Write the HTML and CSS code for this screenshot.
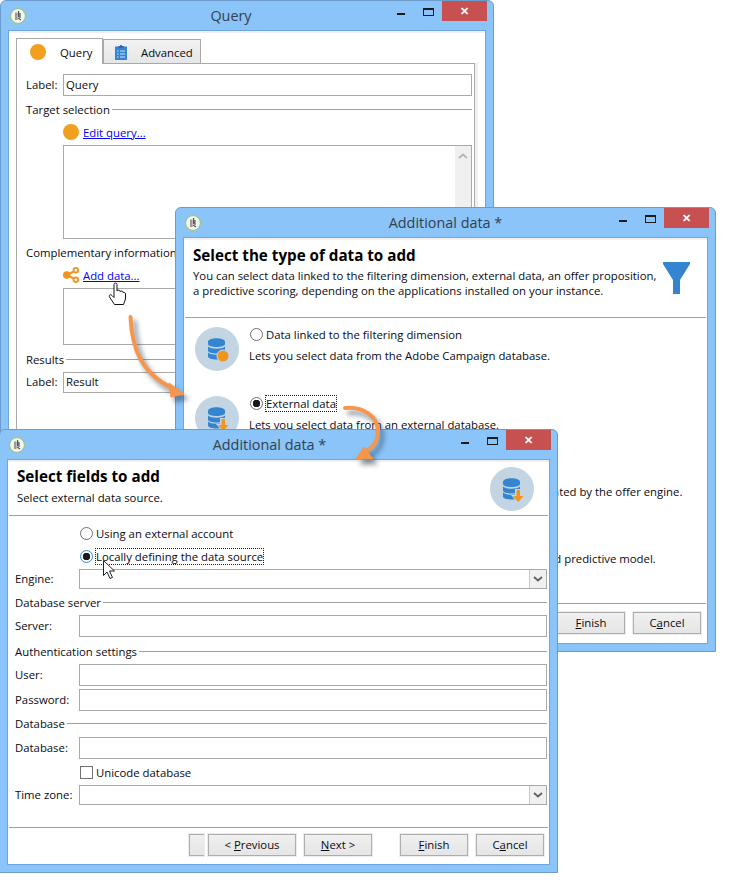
FILE: index.html
```html
<!DOCTYPE html>
<html lang="en">
<head>
    <meta charset="UTF-8">
    <title>Additional data</title>
    <link rel="stylesheet" href="styles.css">
</head>
<body>

    <!-- Icons used more than once -->
    <svg class="defs">
        <defs>
            <symbol id="appIcon" viewBox="0 0 16 16">
                <circle cx="8" cy="8" r="7.4" fill="#f4f6f2" stroke="#9cc45c" stroke-width="1"/>
                <path d="M5 4.500h2.600v7.500H5z" fill="#9a9a9a"/>
                <path d="M8.600 3v6M10 5v5M8 10l3 2" stroke="#555" stroke-width="1.200" fill="none"/>
            </symbol>
            <symbol id="dbShape" viewBox="0 0 44 44">
                <circle cx="22" cy="22" r="22" fill="#c3d5e2"/>
                <path d="M13 15c0-5 17-5 17 0v2c0 4-17 4-17 0z" fill="#3484d2"/>
                <path d="M13 19.500c3 3 14 3 17 0v4c0 4-17 4-17 0z" fill="#3484d2"/>
                <path d="M13 25.500c3 3 14 3 17 0v4c0 4-17 4-17 0z" fill="#3484d2"/>
            </symbol>
            <symbol id="dbDown" viewBox="0 0 44 44">
                <use href="#dbShape"/>
                <path d="M25 22h6v6h4l-7 8-7-8h4z" fill="#c3d5e2"/>
                <path d="M26.500 23h3.500v6h3.500l-5.250 6-5.250-6h3.500z" fill="#f0951e"/>
            </symbol>
            <symbol id="chevDown" viewBox="0 0 10 6">
                <path d="M1 1l4 3.500L9 1" fill="none" stroke="#606060" stroke-width="1.800"/>
            </symbol>
        </defs>
    </svg>

    <!-- Query window -->
    <div class="window win-query">
        <div class="titlebar">
            <svg class="app-icon"><use href="#appIcon"/></svg>
            <span class="title">Query</span>
            <div class="controls"><i class="btn-min"></i><i class="btn-max"></i><b class="btn-close">&#10005;</b></div>
        </div>
        <div class="client">
            <div class="tabs">
                <div class="tab active"><span class="dot"></span><span>Query</span></div>
                <div class="tab">
                    <svg class="tab-icon" viewBox="0 0 14 16">
                        <path d="M1 2.500h12V16H1z" fill="#3484d2"/>
                        <path d="M4.500 3.500v-1.500h1.500a1 1 0 0 1 2 0h1.500v1.500z" fill="#1f5f9f"/>
                        <path d="M3 7h1.500M6 7h5M3 10h1.500M6 10h5M3 13h1.500M6 13h5" stroke="#cfe3f6"/>
                    </svg>
                    <span>Advanced</span>
                </div>
            </div>
            <div class="tab-panel">
                <div class="row q-first"><label class="q-label">Label:</label><div class="input">Query</div></div>
                <div class="section q-sec1"><span>Target selection</span><i></i></div>
                <div class="q-indent q-link1"><span class="dot"></span><a href="#edit">Edit query...</a></div>
                <div class="box q-box1">
                    <div class="scrollbar"><svg viewBox="0 0 10 6"><path d="M1 5l4-3.500L9 5" fill="none" stroke="#b5b5b5" stroke-width="1.800"/></svg></div>
                </div>
                <div class="section q-sec2"><span>Complementary information</span><i></i></div>
                <div class="q-indent q-link2">
                    <svg class="share" viewBox="0 0 16 16">
                        <path d="M12.500 3.500L4 8l8.500 4.500" fill="none" stroke="#f0951e" stroke-width="2"/>
                        <circle cx="3.800" cy="8" r="3.800" fill="#f0951e"/>
                        <circle cx="12.800" cy="3.200" r="2.300" fill="#fff" stroke="#f0951e" stroke-width="1.800"/>
                        <circle cx="12.800" cy="12.800" r="2.300" fill="#fff" stroke="#f0951e" stroke-width="1.800"/>
                    </svg>
                    <a href="#add">Add data...</a>
                </div>
                <div class="box q-box2"></div>
                <div class="section q-sec3"><span>Results</span><i></i></div>
                <div class="row q-last"><label class="q-label">Label:</label><div class="input">Result</div></div>
            </div>
        </div>
    </div>

    <!-- Additional data: type of data -->
    <div class="window win-type">
        <div class="titlebar">
            <svg class="app-icon"><use href="#appIcon"/></svg>
            <span class="title">Additional data *</span>
            <div class="controls"><i class="btn-min"></i><i class="btn-max"></i><b class="btn-close">&#10005;</b></div>
        </div>
        <div class="client">
            <div class="wiz-head type-head">
                <div>
                    <h2>Select the type of data to add</h2>
                    <p>You can select data linked to the filtering dimension, external data, an offer proposition,<br>a predictive scoring, depending on the applications installed on your instance.</p>
                </div>
                <svg class="funnel" viewBox="0 0 27 32"><path d="M0 0h27v2L17 18v14h-7V18L0 2z" fill="#3484d2"/></svg>
            </div>
            <div class="type-list">
                <div class="type-item">
                    <svg class="round-icon" viewBox="0 0 44 44">
                        <use href="#dbShape"/>
                        <circle cx="28" cy="29" r="6.500" fill="#c3d5e2"/>
                        <circle cx="28" cy="29" r="5.500" fill="#f0951e"/>
                    </svg>
                    <div>
                        <div class="radio-line"><span class="radio"></span><span>Data linked to the filtering dimension</span></div>
                        <p>Lets you select data from the Adobe Campaign database.</p>
                    </div>
                </div>
                <div class="type-item item-short">
                    <svg class="round-icon" viewBox="0 0 44 44"><use href="#dbDown"/></svg>
                    <div>
                        <div class="radio-line"><span class="radio on"></span><span class="focus">External data</span></div>
                        <p>Lets you select data from an external database.</p>
                    </div>
                </div>
                <div class="type-item item-short">
                    <div class="round-icon"></div>
                    <div>
                        <div class="radio-line"><span class="radio"></span><span>Offer proposition</span></div>
                        <p>Lets you select data on the latest offer propositions calculated by the offer engine.</p>
                    </div>
                </div>
                <div class="type-item">
                    <div class="round-icon"></div>
                    <div>
                        <div class="radio-line"><span class="radio"></span><span>Predictive scoring</span></div>
                        <p>Lets you select a score computed from data with a selected predictive model.</p>
                    </div>
                </div>
            </div>
            <div class="wiz-foot type-foot">
                <span class="button"><u>F</u>inish</span>
                <span class="button">C<u>a</u>ncel</span>
            </div>
        </div>
    </div>

    <!-- Additional data: fields -->
    <div class="window win-fields">
        <div class="titlebar">
            <svg class="app-icon"><use href="#appIcon"/></svg>
            <span class="title">Additional data *</span>
            <div class="controls"><i class="btn-min"></i><i class="btn-max"></i><b class="btn-close">&#10005;</b></div>
        </div>
        <div class="client">
            <div class="wiz-head fields-head">
                <div>
                    <h2>Select fields to add</h2>
                    <p>Select external data source.</p>
                </div>
                <svg class="round-icon" viewBox="0 0 44 44"><use href="#dbDown"/></svg>
            </div>
            <div class="form">
                <div class="radio-line opt-a"><span class="radio"></span><span>Using an external account</span></div>
                <div class="radio-line opt-b"><span class="radio on focused"></span><span class="focus">Locally defining the data source</span></div>
                <div class="row f-engine"><label>Engine:</label><div class="input combo"><span class="drop"><svg><use href="#chevDown"/></svg></span></div></div>
                <div class="section f-sec"><span>Database server</span><i></i></div>
                <div class="row f-row"><label>Server:</label><div class="input"></div></div>
                <div class="section f-sec2"><span>Authentication settings</span><i></i></div>
                <div class="row f-row"><label>User:</label><div class="input"></div></div>
                <div class="row f-row f-pass"><label>Password:</label><div class="input"></div></div>
                <div class="section f-sec3"><span>Database</span><i></i></div>
                <div class="row f-row f-db"><label>Database:</label><div class="input"></div></div>
                <div class="check-line"><span class="check"></span><span>Unicode database</span></div>
                <div class="row f-engine f-tz"><label>Time zone:</label><div class="input combo"><span class="drop"><svg><use href="#chevDown"/></svg></span></div></div>
            </div>
            <div class="wiz-foot fields-foot">
                <span class="button stub"></span>
                <span class="button btn-prev">&lt; <u>P</u>revious</span>
                <span class="button btn-next"><u>N</u>ext &gt;</span>
                <span class="button btn-finish"><u>F</u>inish</span>
                <span class="button">C<u>a</u>ncel</span>
            </div>
        </div>
    </div>

    <!-- Arrows and cursors drawn over the windows -->
    <svg class="overlay" width="735" height="887" viewBox="0 0 735 887">
        <defs>
            <filter id="arrowShadow" x="-30%" y="-30%" width="160%" height="160%">
                <feGaussianBlur stdDeviation="2.500"/>
            </filter>
            <g id="arrows">
                <path d="M130.500 317C132 350 142 374 174 389" fill="none" stroke-width="4" stroke-linecap="round"/>
                <path d="M184 394L169 383L171 397z"/>
                <path d="M345 408C362 406 379 416 378 433C377 445 368 451 362 453" fill="none" stroke-width="4" stroke-linecap="round"/>
                <path d="M356 459L373 459L364 447z"/>
            </g>
        </defs>
        <use href="#arrows" transform="translate(4 5)" fill="#33475b" stroke="#33475b" opacity="0.6" filter="url(#arrowShadow)"/>
        <use href="#arrows" fill="#f7964a" stroke="#f7964a"/>
        <path d="M114 284.500c0-2 3-2 3 0v6.500c1-1.500 3-1 3 .5 1-1 3-.5 3 1 1-.5 2.500 0 2.500 1.500v5l-2 5.500h-9l-5-7.500c-1-2 1-3 2.500-1.500l2 2z" fill="#fff" stroke="#111" stroke-width="1"/>
        <path d="M103.500 560.500v15l3.500-3.500 3 6.500 2.500-1-3-6.500h5z" fill="#fff" stroke="#222" stroke-width="1"/>
    </svg>

</body>
</html>
```

FILE: styles.css
```css
/* General */
body {
    margin: 0;
    width: 735px;
    height: 887px;
    position: relative;
    overflow: hidden;
    background-color: #fff;
    font-family: "Open Sans", "Noto Sans", sans-serif;
    font-size: 11.35px;
    color: #0a0a14;
    white-space: nowrap;
}

.defs {
    position: absolute;
    width: 0;
    height: 0;
}

.overlay {
    position: absolute;
    left: 0;
    top: 0;
}

/* Windows sit on a free canvas */
.window {
    position: absolute;
    box-sizing: border-box;
    display: flex;
    flex-direction: column;
    background-color: #8ac4f9;
    border: 1px solid #6c9ccb;
    border-radius: 6px 6px 0 0;
}

.win-query {
    left: 0;
    top: 0;
    width: 494px;
    height: 500px;
}

.win-query .titlebar {
    padding-right: 32px;
}

.win-type {
    left: 175px;
    top: 207px;
    width: 541px;
    height: 445px;
}

.win-fields {
    left: -1px;
    top: 429px;
    width: 559px;
    height: 444px;
}

.win-fields .titlebar {
    padding-right: 18px;
}

/* Title bar */
.titlebar {
    height: 29px;
    flex: none;
    display: flex;
    align-items: center;
    justify-content: center;
    position: relative;
}

.app-icon {
    position: absolute;
    left: 9px;
    top: 7px;
    width: 16px;
    height: 16px;
}

.title {
    font-size: 14.4px;
    color: #34404c;
}

.controls {
    position: absolute;
    right: 6px;
    top: 0;
    display: flex;
    align-items: flex-start;
}

.btn-min {
    width: 8px;
    height: 2px;
    margin-top: 12px;
    background-color: #1a1a1a;
}

.btn-max {
    box-sizing: border-box;
    width: 11px;
    height: 8px;
    margin: 7px 8px 0 18px;
    border: 1px solid #1a1a1a;
    border-top-width: 2px;
}

.btn-close {
    width: 45px;
    height: 20px;
    background-color: #c75050;
    color: #fff;
    font-size: 11px;
    font-weight: 700;
    line-height: 20px;
    text-align: center;
}

.client {
    flex: 1;
    margin: 0 7px 7px;
    background-color: #fff;
    border: 1px solid #6ea6dc;
    border-top: 3px solid #f0f0f0;
    outline: 1px solid #6ea6dc;
    outline-offset: -1px;
    min-height: 0;
    display: flex;
    flex-direction: column;
}

/* Shared controls */
.row {
    display: flex;
    align-items: center;
}

.row label {
    padding-bottom: 2px;
}

.input {
    flex: 1;
    box-sizing: border-box;
    height: 100%;
    border: 1px solid #a9a9a9;
    background-color: #fff;
    padding: 0 0 2px 2px;
    display: flex;
    align-items: center;
    justify-content: space-between;
}

.combo {
    padding: 0;
    justify-content: flex-end;
}

.drop {
    width: 16px;
    height: 100%;
    background-color: #f0f0f0;
    border-left: 1px solid #c8c8c8;
    display: flex;
    align-items: center;
    justify-content: center;
}

.drop svg {
    width: 10px;
    height: 6px;
}

.section {
    display: flex;
    align-items: center;
    height: 16px;
}

.section i {
    flex: 1;
    height: 1px;
    margin-left: 2px;
    background-color: #a0a0a0;
}

.dot {
    width: 16px;
    height: 16px;
    flex: none;
    border-radius: 50%;
    background-color: #f0a01e;
}

a {
    color: #0000ff;
}

.radio-line,
.check-line {
    display: flex;
    align-items: center;
}

.radio {
    box-sizing: border-box;
    width: 13px;
    height: 13px;
    margin: 0 3px 0 1px;
    flex: none;
    border: 1px solid #707070;
    border-radius: 50%;
    background-color: #fff;
}

.radio.on {
    background: radial-gradient(circle, #1a1a1a 0, #1a1a1a 3.5px, #fff 4px);
}

.radio.focused {
    border-color: #3b8bd8;
}

.focus {
    outline: 1px dotted #222;
    outline-offset: 0;
}

.check {
    box-sizing: border-box;
    width: 13px;
    height: 13px;
    margin: 0 3px 0 1px;
    border: 1px solid #707070;
}

.button {
    box-sizing: border-box;
    width: 68px;
    height: 22px;
    padding-bottom: 2px;
    border: 1px solid #adadad;
    outline: 1px solid #ececec;
    background: linear-gradient(#f0f0f0, #e5e5e5);
    display: flex;
    align-items: center;
    justify-content: center;
    white-space: pre;
}

/* Wizard header and footer */
.wiz-head {
    display: flex;
    justify-content: space-between;
    border-bottom: 1px solid #a0a0a0;
    margin: 0 1px;
    flex: none;
}

.wiz-head h2 {
    margin: 0;
    font-size: 15.2px;
    font-weight: 700;
    color: #000;
    line-height: 20px;
}

.wiz-head p {
    margin: 0;
    line-height: 15px;
}

.wiz-foot {
    display: flex;
    flex: none;
    justify-content: flex-end;
    border-top: 1px solid #a0a0a0;
    margin: 0 1px;
}

.round-icon {
    width: 44px;
    height: 44px;
    flex: none;
}

.funnel {
    width: 27px;
    height: 32px;
    margin: 17px 16px 0 0;
}

/* Query window content */
.tabs {
    display: flex;
    align-items: flex-end;
    height: 25px;
    margin: 5px 0 0 7px;
    flex: none;
}

.tab {
    box-sizing: border-box;
    display: flex;
    align-items: center;
    height: 24px;
    width: 98px;
    padding: 1px 0 0 10px;
    border: 1px solid #a9a9a9;
    border-bottom: 0;
    background: linear-gradient(#f2f2f2, #e6e6e6);
}

.tab.active {
    width: 87px;
    height: 26px;
    padding-left: 13px;
    margin-bottom: -1px;
    background: #fff;
    position: relative;
    z-index: 1;
}

.tab.active .dot {
    margin-right: 14px;
}

.tab-icon {
    width: 14px;
    height: 16px;
    margin-right: 13px;
}

.tab-panel {
    flex: 1;
    margin: 0 10px 0 7px;
    padding: 0 2px 0 9px;
    border: 1px solid #a9a9a9;
    box-shadow: 3px 0 0 #f0f0f0;
}

.q-label {
    width: 37px;
}

.q-first {
    height: 22px;
    margin-top: 10px;
}

.q-sec1 {
    margin-top: 5px;
}

.q-indent {
    display: flex;
    align-items: center;
    height: 16px;
    padding-left: 37px;
}

.q-indent .dot,
.share {
    margin-right: 4px;
}

.share {
    width: 16px;
    height: 16px;
}

.q-link1 {
    margin-top: 7px;
}

.box {
    box-sizing: border-box;
    margin-left: 37px;
    border: 1px solid #a9a9a9;
    display: flex;
    justify-content: flex-end;
}

.q-box1 {
    height: 94px;
    margin-top: 5px;
}

.scrollbar {
    width: 16px;
    background-color: #f0f0f0;
    text-align: center;
}

.scrollbar svg {
    width: 10px;
    height: 6px;
    margin-top: 7px;
}

.q-sec2 {
    margin-top: 5px;
}

.q-link2 {
    margin-top: 7px;
}

.q-box2 {
    height: 57px;
    margin-top: 5px;
}

.q-sec3 {
    margin-top: 6px;
}

.q-last {
    height: 21px;
    margin-top: 5px;
}

/* Type window content */
.type-head {
    height: 78px;
    padding: 5px 0 0 8px;
    box-sizing: border-box;
}

.type-head p {
    margin-top: 3px;
}

.type-list {
    flex: 1;
    padding: 8px 0 0 11px;
}

.type-item {
    display: flex;
    height: 69px;
    gap: 10px;
}

.item-short {
    height: 67px;
}

.type-item .round-icon {
    margin-top: 1px;
}

.type-item p {
    margin: 6px 0 0;
}

.type-item .radio-line {
    height: 16px;
}

.type-foot {
    height: 40px;
    gap: 8px;
    padding: 8px 5px 0 0;
    box-sizing: border-box;
}

/* Fields window content */
.fields-head {
    height: 54px;
    padding: 4px 14px 0 8px;
    box-sizing: border-box;
}

.fields-head p {
    margin-top: 4px;
}

.fields-head .round-icon {
    margin-top: 1px;
}

.form {
    flex: 1;
    padding: 6px 2px 0 7px;
    box-sizing: border-box;
}

.form label {
    width: 64px;
    flex: none;
}

.radio-line.opt-a,
.radio-line.opt-b {
    height: 22px;
    margin-left: 64px;
}

.opt-b {
    margin-top: 1px;
}

.f-engine {
    height: 20px;
    margin-top: 2px;
}

.f-sec {
    margin-top: 5px;
}

.f-row {
    height: 22px;
    margin-top: 5px;
}

.f-sec2 {
    margin-top: 6px;
}

.f-pass {
    margin-top: 3px;
}

.f-sec3 {
    margin-top: 4px;
}

.f-db {
    margin-top: 6px;
}

.check-line {
    height: 16px;
    margin: 5px 0 0 64px;
}

.f-tz {
    margin-top: 5px;
}

.fields-foot {
    height: 37px;
    padding: 6px 4px 0 0;
    box-sizing: border-box;
    gap: 8px;
}

.stub {
    width: 15px;
    border-right: 0;
    margin-right: -4px;
}

.btn-prev {
    width: 88px;
}

.btn-finish {
    margin-left: 20px;
}
```
